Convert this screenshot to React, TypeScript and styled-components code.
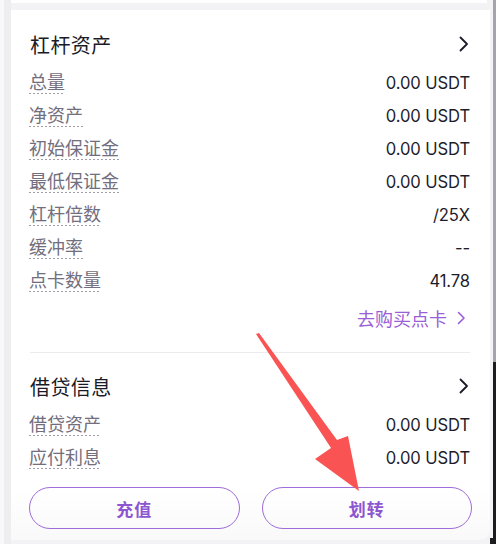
import React from "react";
import styled, { createGlobalStyle } from "styled-components";

const Global = createGlobalStyle`
  html, body { margin: 0; padding: 0; }
  body {
    width: 496px;
    height: 544px;
    overflow: hidden;
    background: #f3f3f6;
    font-family: Inter, "Noto Sans CJK SC", "Noto Sans", sans-serif;
  }
`;

const Page = styled.div`
  position: relative;
  width: 496px;
  height: 544px;
  display: flex;
  flex-direction: row;
  overflow: hidden;
`;

const Gutter = styled.div`
  width: 11px;
  flex: none;
  background: linear-gradient(to right, #f8f8fa 0 4px, #eeeef1 4px 11px);
`;

const Column = styled.div`
  width: 479px;
  flex: none;
  display: flex;
  flex-direction: column;
  gap: 7px;
`;

const PrevCard = styled.div`
  height: 3px;
  background: #ffffff;
  margin-right: 3px;
`;

const Card = styled.div`
  height: 530px;
  background: linear-gradient(to bottom, #ffffff 0 480px, #f9f9f9 530px);
  border-radius: 0 0 10px 0;
  padding: 19px 18px 0 18px;
  box-sizing: border-box;
  display: flex;
  flex-direction: column;
`;

const EdgeGap = styled.div`
  width: 3px;
  flex: none;
  background: linear-gradient(to bottom, #f3f3f6 0 538px, #1e1e20 538px);
`;

const EdgeBar = styled.div`
  width: 3px;
  flex: none;
  background: linear-gradient(to bottom, #a4a4ac 0 362px, #1c1c1e 362px);
`;

const TitleRow = styled.div`
  height: 30px;
  display: flex;
  align-items: center;
  justify-content: space-between;
  padding: 0 3px 0 1px;
`;

const Title = styled.div`
  font-size: 20px;
  color: #1b1a27;
  letter-spacing: 0.4px;
`;

const Chevron = styled.svg<{ $w?: number; $h?: number }>`
  width: ${(p) => p.$w ?? 10}px;
  height: ${(p) => p.$h ?? 16}px;
  flex: none;
`;

const RowList = styled.div`
  margin-top: 7px;
  display: flex;
  flex-direction: column;
`;

const Row = styled.div`
  height: 33px;
  display: flex;
  align-items: center;
  justify-content: space-between;
  padding: 0 2px 0 0;
`;

const Label = styled.span`
  font-size: 18px;
  line-height: 20px;
  color: #726e7d;
  padding-bottom: 1px;
  margin-top: 1px;
  background-image: linear-gradient(to right, #a09da9 50%, transparent 50%);
  background-size: 4px 1px;
  background-repeat: repeat-x;
  background-position: left bottom;
`;

const Value = styled.span`
  font-size: 16.6px;
  color: #1e1c2a;
  letter-spacing: -0.1px;
`;

const LinkRow = styled.div`
  margin-top: 6px;
  height: 30px;
  display: flex;
  align-items: center;
  justify-content: flex-end;
  gap: 10px;
  padding-right: 6px;
  color: #9a5ed6;
  font-size: 18px;
`;

const Divider = styled.div`
  margin-top: 19px;
  height: 1px;
  background: #ececef;
  margin-left: 1px;
  margin-right: 2px;
`;

const Section2 = styled.div`
  margin-top: 18px;
  display: flex;
  flex-direction: column;
`;

const Buttons = styled.div`
  margin-top: 13px;
  display: grid;
  grid-template-columns: 1fr 1fr;
  gap: 22px;
`;

const Button = styled.button`
  height: 42px;
  border: 1px solid #9f6cda;
  border-radius: 21px;
  background: transparent;
  color: #8e55d1;
  font-family: "Noto Sans CJK SC", sans-serif;
  font-size: 17px;
  font-weight: 700;
  letter-spacing: 1px;
  display: flex;
  align-items: center;
  justify-content: center;
  padding: 0;
`;

const ArrowOverlay = styled.svg`
  position: absolute;
  left: 0;
  top: 0;
  width: 496px;
  height: 544px;
  pointer-events: none;
`;

const ChevronIcon = ({ color = "#1d1b28", w = 10, h = 16, sw = 1.8 }: { color?: string; w?: number; h?: number; sw?: number }) => (
  <Chevron $w={w} $h={h} viewBox={`0 0 ${w} ${h}`}>
    <polyline
      points={`1.5,1.5 ${w - 2},${h / 2} 1.5,${h - 1.5}`}
      fill="none"
      stroke={color}
      strokeWidth={sw}
      strokeLinecap="round"
      strokeLinejoin="round"
    />
  </Chevron>
);

const leverage: [string, string][] = [
  ["总量", "0.00 USDT"],
  ["净资产", "0.00 USDT"],
  ["初始保证金", "0.00 USDT"],
  ["最低保证金", "0.00 USDT"],
  ["杠杆倍数", "/25X"],
  ["缓冲率", "--"],
  ["点卡数量", "41.78"],
];

const loan: [string, string][] = [
  ["借贷资产", "0.00 USDT"],
  ["应付利息", "0.00 USDT"],
];

export default function App() {
  return (
    <>
      <Global />
      <Page>
        <Gutter />
        <Column>
          <PrevCard />
          <Card>
            <TitleRow>
              <Title>杠杆资产</Title>
              <ChevronIcon />
            </TitleRow>
            <RowList>
              {leverage.map(([l, v]) => (
                <Row key={l}>
                  <Label>{l}</Label>
                  <Value>{v}</Value>
                </Row>
              ))}
            </RowList>
            <LinkRow>
              <span>去购买点卡</span>
              <ChevronIcon color="#9a5ed6" w={9} h={14} sw={1.6} />
            </LinkRow>
            <Divider />
            <Section2>
              <TitleRow>
                <Title>借贷信息</Title>
                <ChevronIcon />
              </TitleRow>
              <RowList>
                {loan.map(([l, v]) => (
                  <Row key={l}>
                    <Label>{l}</Label>
                    <Value>{v}</Value>
                  </Row>
                ))}
              </RowList>
            </Section2>
            <Buttons>
              <Button>充值</Button>
              <Button>划转</Button>
            </Buttons>
          </Card>
        </Column>
        <EdgeGap />
        <EdgeBar />
        <ArrowOverlay viewBox="0 0 496 544">
          <polygon
            points="256,334 259,333 337,440 348,436 359,491 315,459 331,448"
            fill="#fa5353"
          />
        </ArrowOverlay>
      </Page>
    </>
  );
}
